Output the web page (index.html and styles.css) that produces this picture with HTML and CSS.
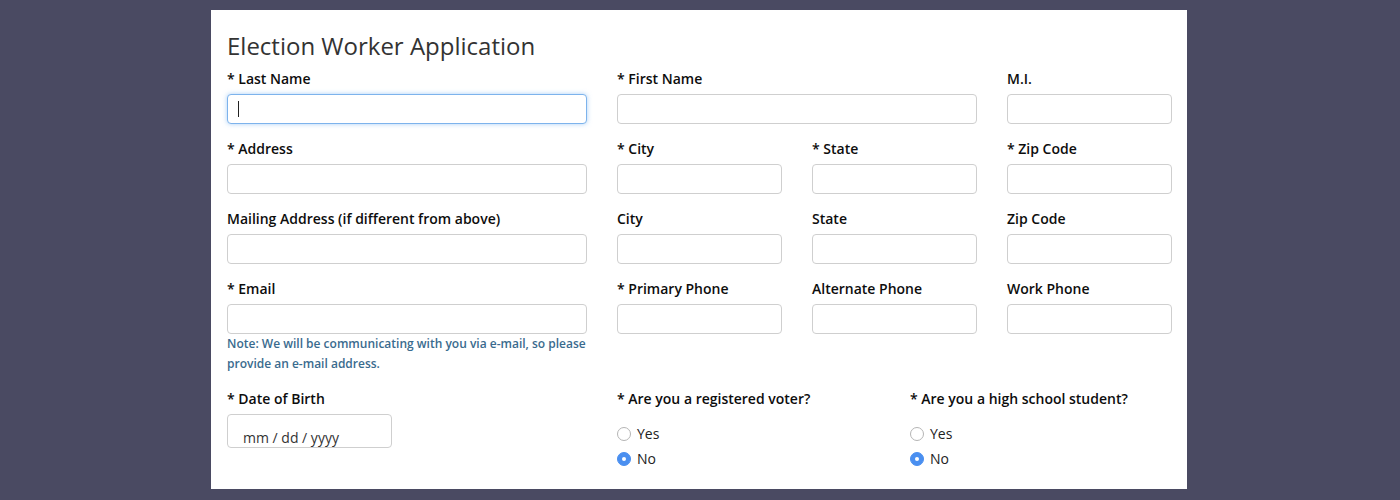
FILE: index.html
```html
<!DOCTYPE html>
<html lang="en">
<head>
<meta charset="utf-8">
<title>Election Worker Application</title>
<link rel="stylesheet" href="styles.css">
</head>
<body>
<main class="card">
  <h1 class="title">Election Worker Application</h1>

  <div class="grid">
    <div class="field">
      <label class="label">* Last Name</label>
      <div class="focus-wrap">
        <input class="input input-focus" type="text">
        <span class="caret"></span>
      </div>
    </div>
    <div class="field span2">
      <label class="label">* First Name</label>
      <input class="input" type="text">
    </div>
    <div class="field">
      <label class="label">M.I.</label>
      <input class="input" type="text">
    </div>

    <div class="field">
      <label class="label">* Address</label>
      <input class="input" type="text">
    </div>
    <div class="field">
      <label class="label">* City</label>
      <input class="input" type="text">
    </div>
    <div class="field">
      <label class="label">* State</label>
      <input class="input" type="text">
    </div>
    <div class="field">
      <label class="label">* Zip Code</label>
      <input class="input" type="text">
    </div>

    <div class="field">
      <label class="label">Mailing Address (if different from above)</label>
      <input class="input" type="text">
    </div>
    <div class="field">
      <label class="label">City</label>
      <input class="input" type="text">
    </div>
    <div class="field">
      <label class="label">State</label>
      <input class="input" type="text">
    </div>
    <div class="field">
      <label class="label">Zip Code</label>
      <input class="input" type="text">
    </div>

    <div class="field">
      <label class="label">* Email</label>
      <input class="input" type="text">
      <p class="note">Note: We will be communicating with you via e-mail, so please provide an e-mail address.</p>
    </div>
    <div class="field">
      <label class="label">* Primary Phone</label>
      <input class="input" type="text">
    </div>
    <div class="field">
      <label class="label">Alternate Phone</label>
      <input class="input" type="text">
    </div>
    <div class="field">
      <label class="label">Work Phone</label>
      <input class="input" type="text">
    </div>
  </div>

  <div class="grid-bottom">
    <div class="field">
      <label class="label">* Date of Birth</label>
      <div class="date">mm / dd / yyyy</div>
    </div>
    <div class="field">
      <label class="label">* Are you a registered voter?</label>
      <div class="radios">
        <div class="radio"><span class="dot"></span><span>Yes</span></div>
        <div class="radio"><span class="dot checked"></span><span>No</span></div>
      </div>
    </div>
    <div class="field">
      <label class="label">* Are you a high school student?</label>
      <div class="radios">
        <div class="radio"><span class="dot"></span><span>Yes</span></div>
        <div class="radio"><span class="dot checked"></span><span>No</span></div>
      </div>
    </div>
  </div>
</main>
</body>
</html>
```

FILE: styles.css
```css
html, body {
  margin: 0;
  padding: 0;
}
body {
  background: #4a4a62;
  font-family: "Open Sans", "Liberation Sans", sans-serif;
  color: #222;
  height: 500px;
  overflow: hidden;
}
.card {
  width: 976px;
  box-sizing: border-box;
  margin: 10px 0 0 211px;
  background: #fff;
  padding: 19px 15px 20px 16px;
}
.title {
  margin: 0 0 7px;
  font-size: 24px;
  font-weight: 400;
  line-height: 33px;
  color: #333;
}
.grid {
  display: grid;
  grid-template-columns: 360px 165px 165px 165px;
  column-gap: 30px;
}
.grid-bottom {
  display: grid;
  grid-template-columns: 360px 263px 1fr;
  column-gap: 30px;
}
.span2 {
  grid-column: span 2;
}
.field {
  display: flex;
  flex-direction: column;
  margin-bottom: 15px;
}
.grid-bottom .field {
  margin-bottom: 0;
}
.label {
  font-size: 14px;
  font-weight: 600;
  line-height: 20px;
  color: #0d0d0d;
  margin-bottom: 5px;
}
.input {
  display: block;
  box-sizing: border-box;
  width: 100%;
  height: 30px;
  margin: 0;
  border: 1px solid #cfcfcf;
  border-radius: 4px;
  background: #fff;
  font: inherit;
  outline: none;
}
.focus-wrap {
  position: relative;
}
.input-focus {
  border-color: #7db3ec;
  box-shadow: 0 0 5px rgba(102, 170, 240, 0.55);
}
.caret {
  position: absolute;
  left: 11px;
  top: 7px;
  width: 1px;
  height: 16px;
  background: #222;
}
.note {
  margin: 0;
  font-size: 12px;
  font-weight: 600;
  line-height: 20px;
  color: #3a6b8e;
}
.date {
  box-sizing: border-box;
  width: 165px;
  height: 34px;
  border: 1px solid #cfcfcf;
  border-radius: 4px;
  padding: 13px 0 0 15px;
  font-size: 14px;
  line-height: 20px;
  color: #333;
}
.radios {
  display: flex;
  flex-direction: column;
  gap: 5px;
  margin-top: 10px;
}
.radio {
  display: flex;
  align-items: center;
  gap: 6px;
  font-size: 14px;
  line-height: 20px;
  color: #222;
}
.dot {
  box-sizing: border-box;
  width: 14px;
  height: 14px;
  border-radius: 50%;
  border: 1px solid #b5b5b5;
  background: #fff;
  display: flex;
  align-items: center;
  justify-content: center;
}
.dot.checked {
  border-color: #4a8ff0;
  background: #4a8ff0;
}
.dot.checked::after {
  content: "";
  width: 4px;
  height: 4px;
  border-radius: 50%;
  background: #fff;
}
```
